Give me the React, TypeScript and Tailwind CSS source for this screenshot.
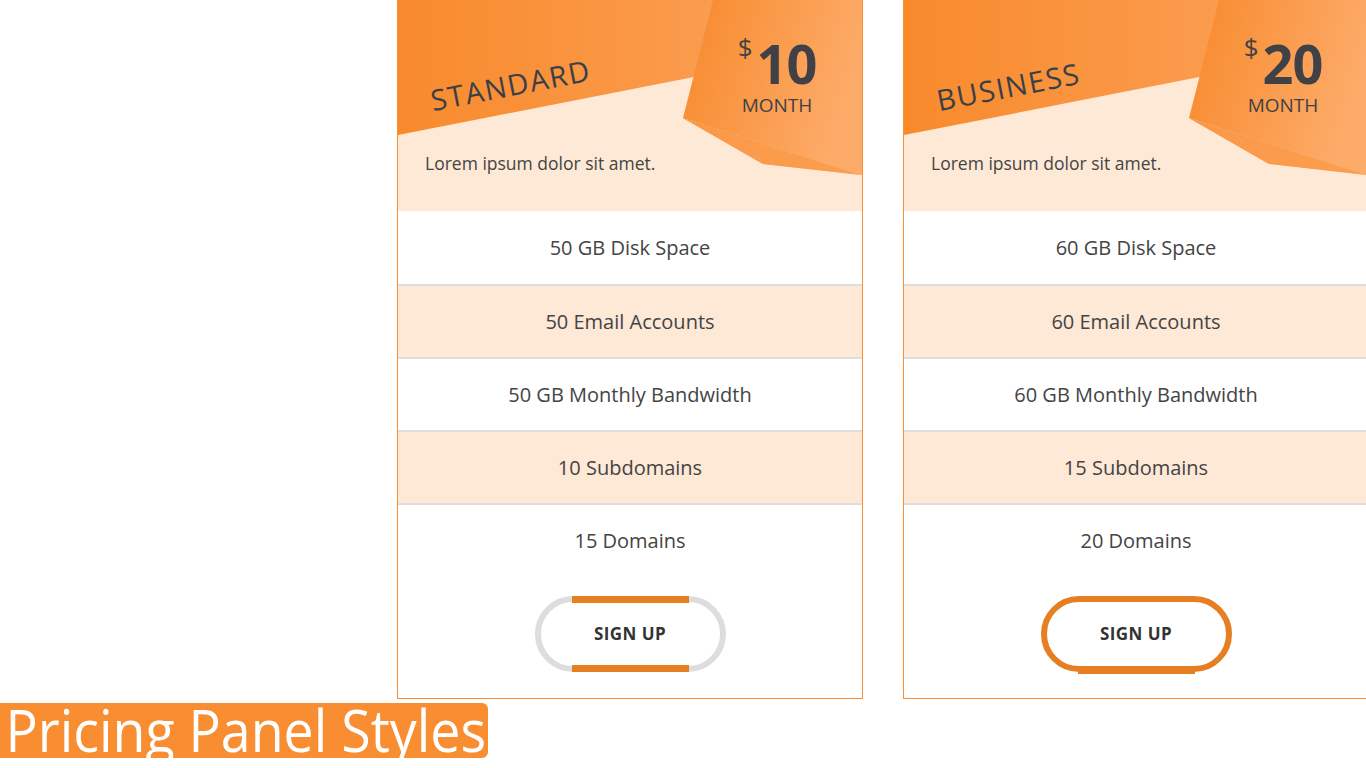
const plans = [
  {
    name: 'STANDARD',
    price: '10',
    features: ['50 GB Disk Space', '50 Email Accounts', '50 GB Monthly Bandwidth', '10 Subdomains', '15 Domains'],
    active: false,
  },
  {
    name: 'BUSINESS',
    price: '20',
    features: ['60 GB Disk Space', '60 Email Accounts', '60 GB Monthly Bandwidth', '15 Subdomains', '20 Domains'],
    active: true,
  },
];

function HeaderShape({ id }: { id: string }) {
  return (
    <svg className="absolute inset-0 w-full h-full" viewBox="0 0 464 211" preserveAspectRatio="none">
      <defs>
        <linearGradient id={`band-${id}`} x1="0" y1="0" x2="1" y2="0">
          <stop offset="0" stopColor="#f88a2c" />
          <stop offset="1" stopColor="#fca45e" />
        </linearGradient>
        <linearGradient id={`box-${id}`} x1="0" y1="0" x2="1" y2="0.3">
          <stop offset="0" stopColor="#f7892b" />
          <stop offset="1" stopColor="#fdab69" />
        </linearGradient>
      </defs>
      <polygon points="0,0 464,0 464,44 0,135" fill={`url(#band-${id})`} />
      <polygon points="315,0 464,0 464,175 365,164 285,118" fill={`url(#box-${id})`} />
      <polygon points="285,118 365,164 463,175" fill="#fa9a4a" opacity="0.85" />
      <line x1="285" y1="118" x2="463" y2="175" stroke="#fcb06f" strokeWidth="0.8" strokeDasharray="2 2" />
    </svg>
  );
}

function SignUp({ active }: { active: boolean }) {
  return (
    <button
      className={`relative w-[191px] h-[76px] rounded-full border-[6px] bg-white text-[17px] font-bold tracking-wide text-[#333] ${
        active ? 'border-[#e67e22]' : 'border-[#dddddd]'
      }`}
    >
      {!active && <span className="absolute left-[31px] right-[31px] -top-[6px] h-[7px] bg-[#e67e22]" />}
      <span className={`absolute left-[31px] right-[31px] bg-[#e67e22] ${active ? '-bottom-[8px] h-[8px]' : '-bottom-[6px] h-[7px]'}`} />
      SIGN UP
    </button>
  );
}

function PricingCard({ plan }: { plan: (typeof plans)[number] }) {
  return (
    <div className="w-[466px] shrink-0 border border-t-0 border-[#f98d31] bg-white">
      {/* header */}
      <div className="relative h-[211px] bg-[#fee8d6] overflow-hidden">
        <HeaderShape id={plan.name} />
        <h3 className="absolute left-[37px] top-[78px] origin-bottom-left -rotate-[11deg] text-[29px] font-medium tracking-[1.5px] text-[#3a3f48]">
          {plan.name}
        </h3>
        <div className="absolute left-[329px] top-[30px] w-[100px] flex flex-col items-center text-[#3f4146]">
          <div className="flex items-start leading-none">
            <span className="text-[26px] mt-[4px] mr-[4px]">$</span>
            <span className="text-[54px] font-bold tracking-[-1px] mt-[6px]">{plan.price}</span>
          </div>
          <span className="text-[19px] mt-[1px]">MONTH</span>
        </div>
        <p className="absolute left-[27px] top-[150px] text-[17.5px] text-[#444]">Lorem ipsum dolor sit amet.</p>
      </div>

      {/* features */}
      <ul>
        {plan.features.map((f, i) => (
          <li
            key={f}
            className={`h-[73px] flex items-center justify-center text-[20px] text-[#444] ${
              i > 0 ? 'border-t-2 border-[#dedede]' : ''
            } ${i % 2 === 1 ? 'bg-[#fee8d6]' : 'bg-white'}`}
          >
            {f}
          </li>
        ))}
      </ul>

      <div className="flex justify-center pt-[20px] pb-[26px]">
        <SignUp active={plan.active} />
      </div>
    </div>
  );
}

export default function App() {
  return (
    <div className="relative w-full h-[768px] overflow-hidden bg-white" style={{ fontFamily: '"Open Sans", "Noto Sans", sans-serif' }}>
      <div className="flex gap-[40px] pl-[397px] items-start">
        {plans.map((p) => (
          <PricingCard key={p.name} plan={p} />
        ))}
      </div>

      {/* caption overlay */}
      <div className="absolute left-0 top-[703px] w-[488px] h-[55px] rounded-r-[6px] bg-[#f98d31]">
        <span className="block w-[530px] origin-left scale-x-[0.91] pl-[6px] text-[59px] leading-none text-white whitespace-nowrap -mt-[3px]">
          Pricing Panel Styles
        </span>
      </div>
    </div>
  );
}
